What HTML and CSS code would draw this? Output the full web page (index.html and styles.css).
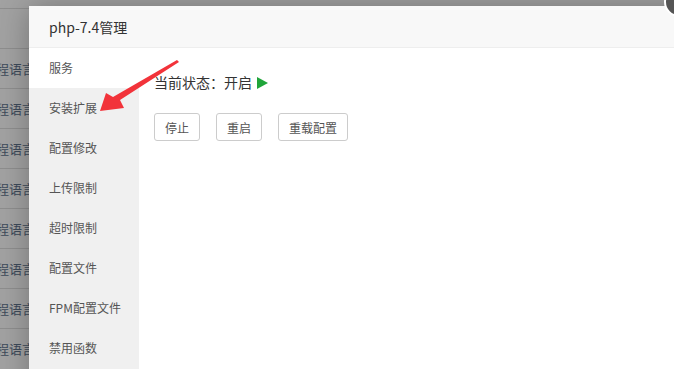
FILE: index.html
```html
<!DOCTYPE html>
<html lang="zh-CN">
<head>
  <meta charset="UTF-8">
  <title>php-7.4管理</title>
  <link rel="stylesheet" href="styles.css">
</head>
<body>
  <div class="backdrop">
    <div class="bg-list">
      <div class="bg-row"></div>
      <div class="bg-row">程语言</div>
      <div class="bg-row">程语言</div>
      <div class="bg-row">程语言</div>
      <div class="bg-row">程语言</div>
      <div class="bg-row">程语言</div>
      <div class="bg-row">程语言</div>
      <div class="bg-row">程语言</div>
      <div class="bg-row">程语言</div>
    </div>

    <div class="dialog">
      <div class="dialog-title">php-7.4管理</div>
      <div class="dialog-body">
        <ul class="side-menu">
          <li class="active">服务</li>
          <li>安装扩展</li>
          <li>配置修改</li>
          <li>上传限制</li>
          <li>超时限制</li>
          <li>配置文件</li>
          <li>FPM配置文件</li>
          <li>禁用函数</li>
        </ul>
        <div class="main">
          <div class="status">当前状态：开启 <span class="run-icon"></span></div>
          <div class="actions">
            <button class="btn">停止</button>
            <button class="btn">重启</button>
            <button class="btn">重载配置</button>
          </div>
        </div>
      </div>
    </div>

    <span class="close-btn"></span>

    <svg class="arrow" width="674" height="369" viewBox="0 0 674 369">
      <polygon fill="#f2333a" points="177,60 179,62 120,100 124,108 100,111 106,93 113,97"/>
    </svg>
  </div>
</body>
</html>
```

FILE: styles.css
```css
* {
  box-sizing: border-box;
}

body {
  margin: 0;
  font-family: "Microsoft YaHei", "Noto Sans CJK SC", "Liberation Sans", sans-serif;
  color: #333;
}

.backdrop {
  position: relative;
  width: 674px;
  height: 369px;
  overflow: hidden;
  background: #a2a2a2;
}

.bg-list {
  padding-top: 8px;
}

.bg-row {
  height: 40px;
  line-height: 40px;
  border-top: 1px solid #8e8e8e;
  font-size: 13px;
  color: #3d4a5a;
  text-indent: -4px;
}

.dialog {
  position: absolute;
  left: 29px;
  top: 6px;
  width: 680px;
  height: 400px;
  background: #fff;
  box-shadow: 1px 1px 30px rgba(0, 0, 0, 0.3);
}

.dialog-title {
  height: 42px;
  line-height: 42px;
  padding-left: 20px;
  font-size: 14px;
  color: #333;
  background: #f8f8f8;
  border-bottom: 1px solid #eee;
}

.dialog-body {
  display: flex;
}

.side-menu {
  list-style: none;
  margin: 0;
  padding: 0;
  width: 110px;
  min-height: 330px;
  background: #f0f0f0;
}

.side-menu li {
  height: 40px;
  line-height: 40px;
  padding-left: 20px;
  font-size: 12px;
  color: #555;
}

.side-menu li.active {
  background: #fff;
}

.main {
  padding: 22px 15px;
}

.status {
  font-size: 14px;
  line-height: 24px;
  color: #333;
}

.run-icon {
  display: inline-block;
  width: 0;
  height: 0;
  margin-left: 2px;
  border-top: 6px solid transparent;
  border-bottom: 6px solid transparent;
  border-left: 11px solid #20a53a;
  vertical-align: -1px;
}

.actions {
  display: flex;
  gap: 16px;
  margin-top: 19px;
}

.btn {
  height: 28px;
  padding: 0 10px;
  font-family: inherit;
  font-size: 12px;
  color: #555;
  background: #fff;
  border: 1px solid #ccc;
  border-radius: 3px;
}

.close-btn {
  position: absolute;
  left: 664px;
  top: -13px;
  width: 30px;
  height: 30px;
  border-radius: 50%;
  background: #555;
  border: 2px solid #fff;
}

.arrow {
  position: absolute;
  left: 0;
  top: 0;
}
```
